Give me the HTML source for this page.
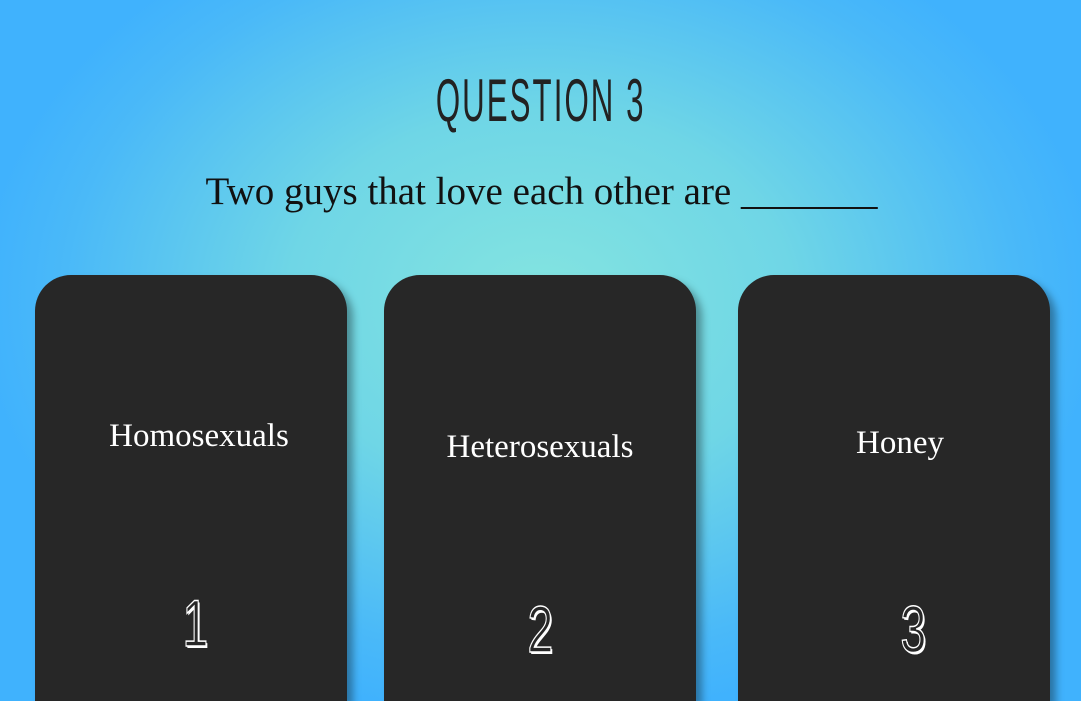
<!DOCTYPE html>
<html style="width:1081px;height:701px;overflow:hidden"><head><style>
body{margin:0;width:1081px;height:701px;overflow:hidden;position:relative;
background:radial-gradient(ellipse 560px 420px at 540px 300px,#84e4e0 0%,#6fd6e6 45%,#4ab9f8 85%,#40b2fd 100%);
font-family:"Liberation Serif",serif;}
.t{position:absolute;left:0;width:1081px;top:66px;text-align:center;font-family:"Liberation Sans Narrow","Liberation Sans",sans-serif;font-size:60px;color:#222;}
.t span{display:inline-block;transform:scaleX(0.52);letter-spacing:4px}
.s{position:absolute;left:1px;width:1081px;top:169px;text-align:center;font-size:39px;color:#111;letter-spacing:0px}
.c{position:absolute;top:275px;width:312px;height:426px;background:#272727;border-radius:36px 36px 0 0;box-shadow:6px 6px 8px rgba(0,0,0,.35);}
.c .l{position:absolute;left:0;width:100%;text-align:center;color:#fff;font-size:33px}
.c .n{position:absolute;left:0;width:100%;text-align:center;color:#272727;font-size:66px;font-family:"Liberation Sans Narrow","Liberation Sans",sans-serif;-webkit-text-stroke:1.5px #fff;text-shadow:2px 2px 0 #fff;}
.c .n span{display:inline-block;transform:scaleX(.7)}
</style></head><body>
<div class="t"><span>QUESTION 3</span></div>
<div class="s">Two guys that love each other are _______</div>
<div class="c" style="left:35px"><div class="l" style="top:143px;left:8px">Homosexuals</div><div class="n" style="top:310px;left:4px"><span>1</span></div></div>
<div class="c" style="left:384px"><div class="l" style="top:154px">Heterosexuals</div><div class="n" style="top:316px"><span>2</span></div></div>
<div class="c" style="left:738px"><div class="l" style="top:150px;left:6px">Honey</div><div class="n" style="top:316px;left:19px"><span>3</span></div></div>
</body></html>
